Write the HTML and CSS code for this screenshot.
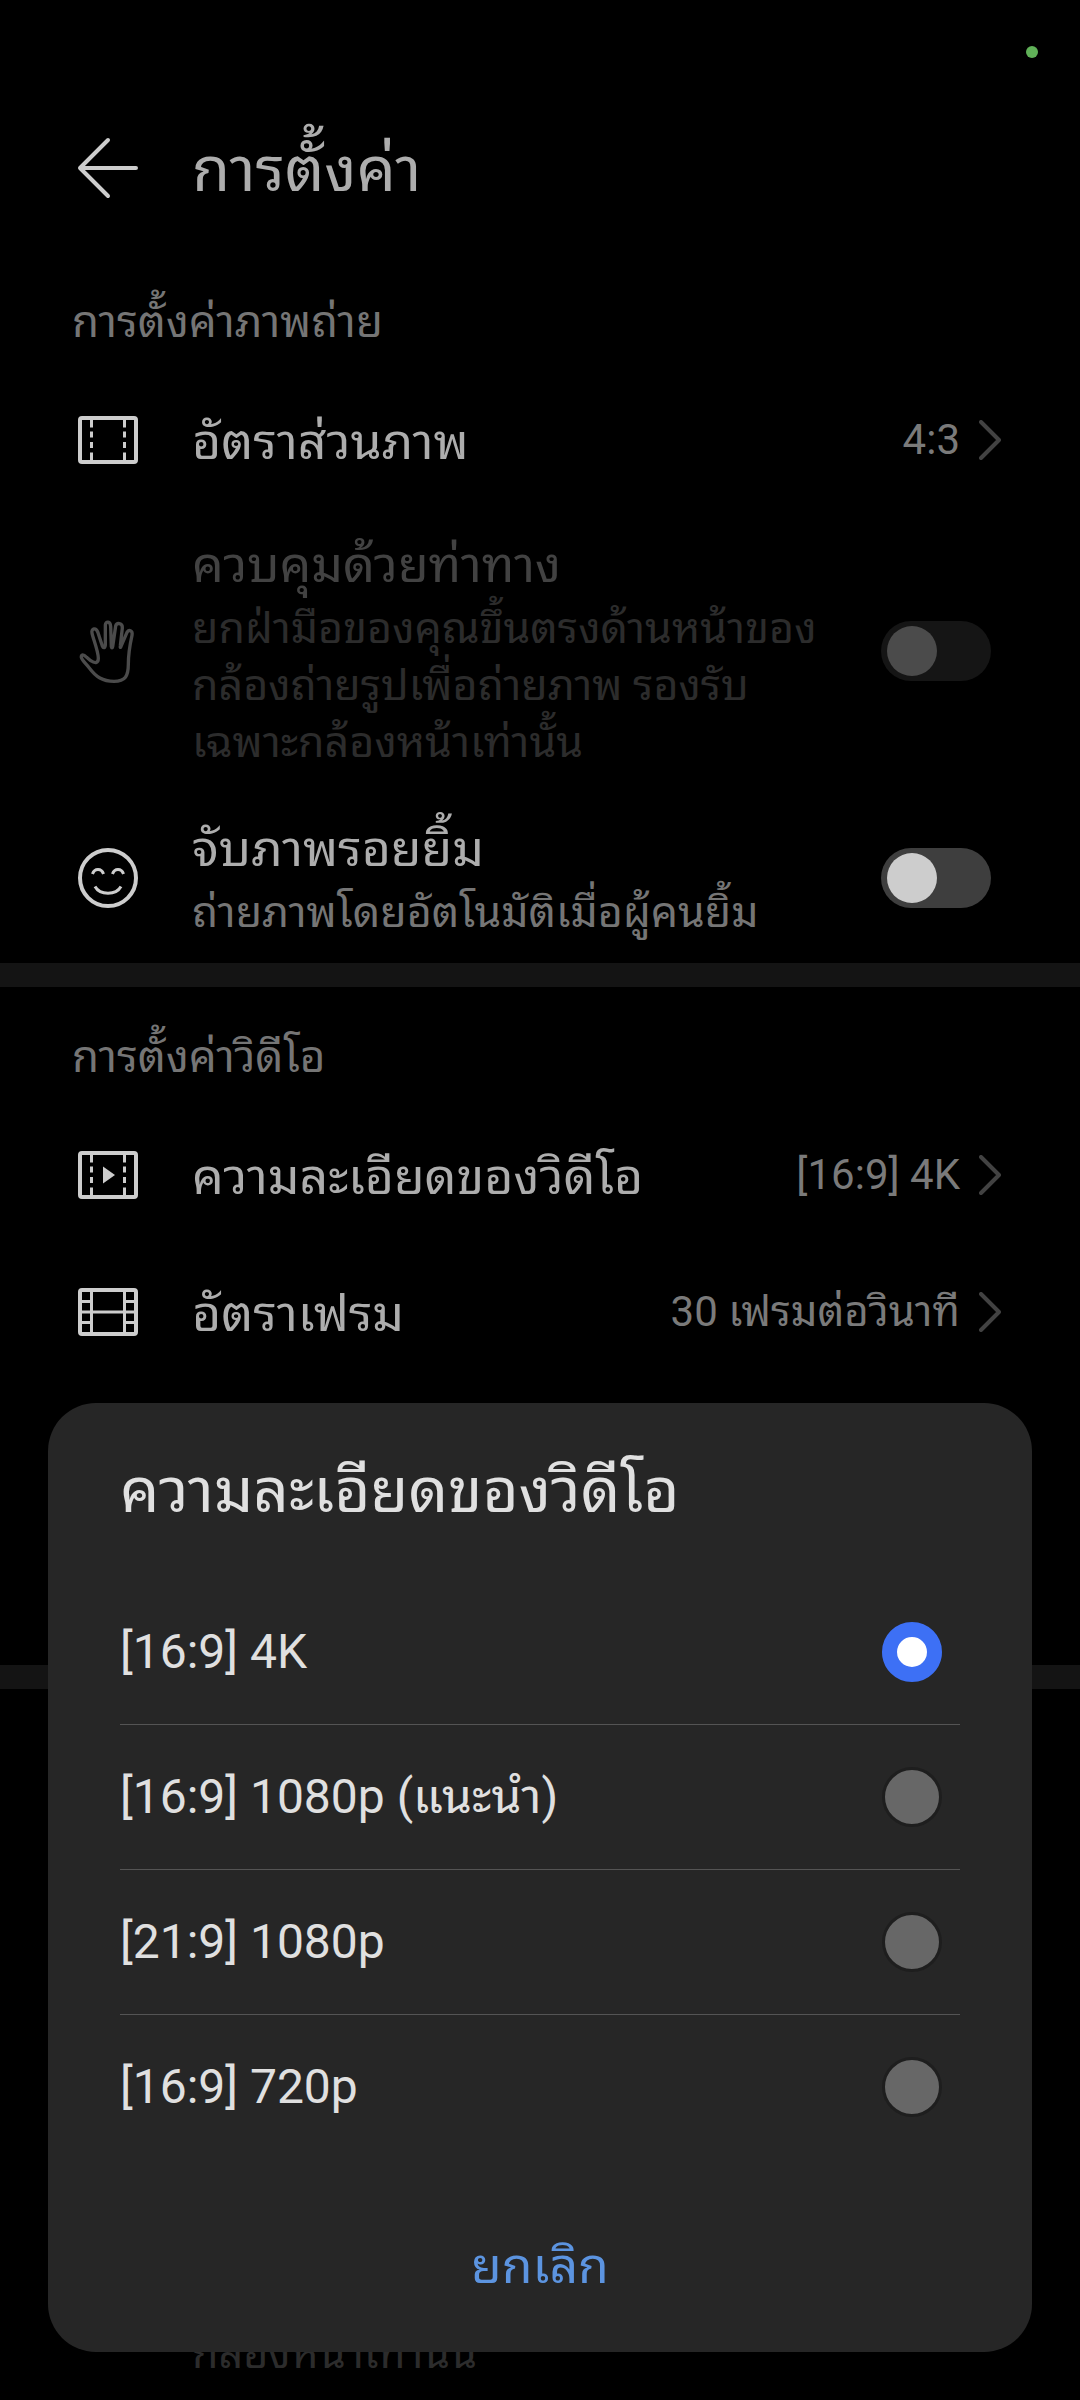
FILE: index.html
```html
<!DOCTYPE html>
<html lang="th">
<head>
    <meta charset="UTF-8">
    <meta name="viewport" content="width=device-width, initial-scale=1.0">
    <title>การตั้งค่า</title>

    <link rel="stylesheet" href="styles.css">
</head>
<body>

    <span class="camera-dot"></span>

    <header>
        <button class="back" aria-label="กลับ">
            <svg class="icon" viewBox="0 0 60 60">
                <path d="M58 30H2M30 2L2 30l28 28"/>
            </svg>
        </button>
        <h1>การตั้งค่า</h1>
    </header>

    <main>
        <!-- Photo settings -->
        <section>
            <h2>การตั้งค่าภาพถ่าย</h2>

            <button class="row row-single">
                <svg class="icon" viewBox="0 0 60 60">
                    <rect x="2" y="8" width="56" height="44" rx="2"/>
                    <path class="thin" d="M13.5 9v8.5M13.5 21.5v6M13.5 32v6M13.5 42.5V51M46.5 9v8.5M46.5 21.5v6M46.5 32v6M46.5 42.5V51"/>
                </svg>
                <span class="text"><span class="label">อัตราส่วนภาพ</span></span>
                <span class="value">4:3</span>
                <svg class="chevron" viewBox="0 0 22 40"><path d="M2 2l18 18L2 38"/></svg>
            </button>

            <div class="row row-tall disabled">
                <svg class="icon" viewBox="0 0 180 180">
                    <path class="hand" d="M10 109C12 118 24 128 34 141C54 168 74 181 108 181C142 181 151 165 151 130C151 95 156 70 162 43C165 28 152 25 147 34L129 76C127 81 126 80 127 74L133 21C134 5 116 4 113 15L104 77C103 82 101 82 100 77L98 17C97 0 83 0 82 12V72C81 82 76 82 73 75L60 35C54 18 39 22 42 36C44 50 61 90 61 112C61 128 50 127 38 119L26 109C16 99 9 100 10 109Z"/>
                </svg>
                <label class="text" for="gesture">
                    <span class="label">ควบคุมด้วยท่าทาง</span>
                    <span class="desc">ยกฝ่ามือของคุณขึ้นตรงด้านหน้าของกล้องถ่ายรูปเพื่อถ่ายภาพ รองรับเฉพาะกล้องหน้าเท่านั้น</span>
                </label>
                <input type="checkbox" role="switch" class="switch" id="gesture" disabled>
            </div>

            <div class="row row-medium">
                <svg class="icon" viewBox="0 0 60 60">
                    <circle cx="30" cy="30" r="28"/>
                    <path class="thin" d="M14.5 26c2-6 9-6 11 0M34.5 26c2-6 9-6 11 0M17 38.5c5 9 21 9 26 0"/>
                </svg>
                <label class="text" for="smile">
                    <span class="label">จับภาพรอยยิ้ม</span>
                    <span class="desc">ถ่ายภาพโดยอัตโนมัติเมื่อผู้คนยิ้ม</span>
                </label>
                <input type="checkbox" role="switch" class="switch" id="smile">
            </div>
        </section>

        <!-- Video settings -->
        <section class="video">
            <h2>การตั้งค่าวิดีโอ</h2>

            <button class="row row-single">
                <svg class="icon" viewBox="0 0 60 60">
                    <rect x="2" y="8" width="56" height="44" rx="2"/>
                    <path class="thin" d="M13.5 9v8.5M13.5 21.5v6M13.5 32v6M13.5 42.5V51M46.5 9v8.5M46.5 21.5v6M46.5 32v6M46.5 42.5V51"/>
                    <path class="solid" d="M25 21.5L37 30l-12 8.5z"/>
                </svg>
                <span class="text"><span class="label">ความละเอียดของวิดีโอ</span></span>
                <span class="value">[16:9] 4K</span>
                <svg class="chevron" viewBox="0 0 22 40"><path d="M2 2l18 18L2 38"/></svg>
            </button>

            <button class="row row-single">
                <svg class="icon" viewBox="0 0 60 60">
                    <rect x="2" y="8" width="56" height="44" rx="2"/>
                    <path class="thin" d="M13.5 8v44M46.5 8v44M2 30h56M2 19.5h11M2 40.5h11M47 19.5h11M47 40.5h11"/>
                </svg>
                <span class="text"><span class="label">อัตราเฟรม</span></span>
                <span class="value">30 เฟรมต่อวินาที</span>
                <svg class="chevron" viewBox="0 0 22 40"><path d="M2 2l18 18L2 38"/></svg>
            </button>
        </section>

        <section class="general disabled">
            <span class="desc">กล้องหน้าเท่านั้น</span>
        </section>
    </main>

    <!-- Resolution picker -->
    <form class="dialog" role="dialog" aria-labelledby="dialog-title">
        <h1 id="dialog-title">ความละเอียดของวิดีโอ</h1>
        <div class="options">
            <label class="option">[16:9] 4K
                <input type="radio" name="resolution" class="radio" checked>
            </label>
            <label class="option">[16:9] 1080p (แนะนำ)
                <input type="radio" name="resolution" class="radio">
            </label>
            <label class="option">[21:9] 1080p
                <input type="radio" name="resolution" class="radio">
            </label>
            <label class="option">[16:9] 720p
                <input type="radio" name="resolution" class="radio">
            </label>
        </div>
        <button type="button" class="cancel">ยกเลิก</button>
    </form>

</body>
</html>
```

FILE: styles.css
```css
* {
    box-sizing: border-box;
}

body {
    margin: 0;
    height: 100vh;
    overflow: hidden;
    display: flex;
    flex-direction: column;
    background-color: #000;
    color: #adadad;
    font-family: Roboto, "Noto Sans Thai Looped", "Noto Sans Thai", sans-serif;
    font-size: 48px;
}

h1, h2 {
    margin: 0;
    font-weight: 400;
}

h1 {
    font-size: 62px;
    line-height: 84px;
}

h2 {
    height: 119px;
    padding: 40px 72px 0;
    color: #757575;
    font-size: 44px;
    line-height: 60px;
}

button {
    padding: 0;
    border: none;
    background: none;
    color: inherit;
    font: inherit;
    text-align: left;
}

.camera-dot {
    position: absolute;
    top: 46px;
    right: 42px;
    width: 12px;
    height: 12px;
    border-radius: 50%;
    background-color: #60b158;
}

header {
    display: flex;
    align-items: center;
    gap: 54px;
    height: 168px;
    margin-top: 84px;
    padding: 0 78px;
    flex: none;
}

header h1 {
    padding-top: 4px;
}

.back {
    display: flex;
}

main {
    flex: 1;
    display: flex;
    flex-direction: column;
}

section + section {
    border-top: 24px solid #141414;
}

/* room for the row that sits under the dialog */
.video {
    padding-bottom: 285px;
}

.general {
    flex: 1;
    display: flex;
    align-items: flex-end;
    padding: 0 192px 18px;
}

/* -------- rows -------- */

.row {
    display: flex;
    align-items: center;
    width: 100%;
    padding: 0 79px 0 78px;
}

.row-single {
    min-height: 137px;
}

.row-medium {
    min-height: 170px;
}

.row-tall {
    min-height: 285px;
}

.text {
    flex: 1;
    margin: 0 44px 0 54px;
}

.row-single .text {
    padding-top: 6px;
}

.label, .desc {
    display: block;
}

.label {
    font-size: 50px;
    line-height: 69px;
}

.desc {
    color: #757575;
    font-size: 43px;
    line-height: 57px;
}

.value {
    margin-right: 19px;
    color: #7a7a7a;
    font-size: 42px;
    line-height: 57px;
}

.disabled .label {
    color: #424242;
}

.disabled .desc {
    color: #2c2c2c;
}

/* -------- icons -------- */

.icon {
    width: 60px;
    height: 60px;
    flex: none;
    overflow: visible;
    fill: none;
    stroke: #cdcdcd;
    stroke-width: 4;
    stroke-linejoin: round;
}

.back .icon {
    stroke-linecap: round;
}

.icon .thin {
    stroke-width: 3;
}

.icon .solid {
    fill: #cdcdcd;
    stroke: none;
}

.icon .hand {
    stroke: #4b4b4b;
    stroke-width: 10;
}

.chevron {
    width: 22px;
    height: 40px;
    flex: none;
    fill: none;
    stroke: #424242;
    stroke-width: 4;
    stroke-linecap: round;
    stroke-linejoin: round;
}

/* -------- controls -------- */

.switch {
    appearance: none;
    display: flex;
    width: 110px;
    height: 60px;
    margin: 0 10px 0 0;
    padding: 5px 6px;
    flex: none;
    border-radius: 30px;
    background-color: #3e3e3e;
}

.switch::before {
    content: "";
    width: 50px;
    height: 50px;
    border-radius: 50%;
    background-color: #cdcdcd;
}

.switch:checked {
    justify-content: flex-end;
}

.switch:disabled {
    background-color: #151515;
}

.switch:disabled::before {
    background-color: #4b4b4b;
}

.radio {
    appearance: none;
    width: 60px;
    height: 60px;
    margin: 0 18px 0 0;
    flex: none;
    border: 3px solid #1e1e1e;
    border-radius: 50%;
    background-color: #676767;
}

.radio:checked {
    border: 15px solid #3d70f5;
    background-color: #fff;
}

/* -------- dialog -------- */

.dialog {
    position: fixed;
    left: 48px;
    right: 48px;
    bottom: 48px;
    display: flex;
    flex-direction: column;
    padding: 46px 72px 41px;
    border-radius: 48px;
    background-color: #262626;
    color: #e0e0e0;
}

.options {
    margin: 47px 0 50px;
}

.option {
    display: flex;
    justify-content: space-between;
    align-items: center;
    height: 144px;
    line-height: 56px;
}

.option + .option {
    height: 145px;
    border-top: 1px solid #545454;
}

.cancel {
    height: 102px;
    color: #5c94e0;
    font-size: 50px;
    text-align: center;
}
```
